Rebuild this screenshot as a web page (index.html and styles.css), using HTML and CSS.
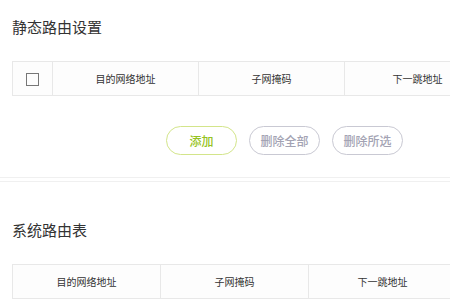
FILE: index.html
```html
<!DOCTYPE html>
<html lang="zh-CN">
<head>
  <meta charset="UTF-8" />
  <meta name="viewport" content="width=device-width, initial-scale=1.0" />
  <title>静态路由设置</title>
  <link rel="stylesheet" href="styles.css">
</head>
<body>
  <div class="section">
    <h2 class="title">静态路由设置</h2>
    <table class="grid static">
      <thead>
        <tr>
          <th class="check"><span class="box"></span></th>
          <th>目的网络地址</th>
          <th>子网掩码</th>
          <th>下一跳地址</th>
        </tr>
      </thead>
    </table>
    <div class="actions">
      <button class="btn add">添加</button>
      <button class="btn">删除全部</button>
      <button class="btn">删除所选</button>
    </div>
  </div>

  <div class="divider"></div>

  <div class="section">
    <h2 class="title second">系统路由表</h2>
    <table class="grid system">
      <thead>
        <tr>
          <th>目的网络地址</th>
          <th>子网掩码</th>
          <th>下一跳地址</th>
        </tr>
      </thead>
    </table>
  </div>
</body>
</html>
```

FILE: styles.css
```css
html, body {
  overflow: hidden;
}
body {
  margin: 0;
  background: #ffffff;
  font-family: "Noto Sans CJK SC", "Noto Sans", sans-serif;
  color: #333;
}
.section {
  padding: 0 12px;
  width: 600px;
}
.title {
  margin: 17px 0 0;
  font-size: 15px;
  font-weight: normal;
  line-height: 20px;
  color: #333;
}
.title.second {
  margin-top: 38px;
}
.grid {
  border-collapse: collapse;
  margin-top: 24px;
  table-layout: fixed;
}
.grid th {
  height: 33px;
  padding: 0;
  border: 1px solid #e8e8e8;
  background: #fdfdfd;
  font-size: 10px;
  font-weight: normal;
  color: #333;
  text-align: center;
}
.static th { width: 145px; }
.static th.check { width: 39px; }
.system th { width: 147px; }
.box {
  display: inline-block;
  width: 11px;
  height: 11px;
  border: 1px solid #777;
  vertical-align: middle;
}
.actions {
  display: flex;
  gap: 12px;
  margin: 30px 0 0 154px;
}
.btn {
  width: 71px;
  height: 29px;
  border: 1px solid #c9c9d3;
  border-radius: 15px;
  background: #fff;
  color: #a3a3b3;
  font-family: inherit;
  font-size: 12px;
  font-weight: 500;
  padding: 0;
  cursor: pointer;
}
.btn.add {
  border-color: #d3e58a;
  color: #95c322;
}
.divider {
  margin-top: 22px;
  height: 3px;
  border-top: 1px solid #f0f0f0;
  border-bottom: 1px solid #f0f0f0;
}
```
